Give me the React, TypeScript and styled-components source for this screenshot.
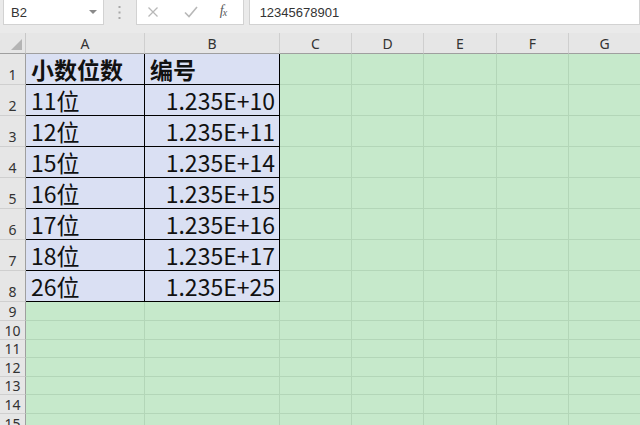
import React from "react";
import styled, { createGlobalStyle } from "styled-components";

const Global = createGlobalStyle`
  html, body { margin: 0; padding: 0; background: #c6e9cb; overflow: hidden; }
  body { width: 640px; height: 425px; font-family: "Noto Sans", "Noto Sans CJK SC", sans-serif; }
`;

const Page = styled.div`
  width: 640px;
  height: 425px;
  overflow: hidden;
  display: flex;
  flex-direction: column;
`;

const FormulaBar = styled.div`
  height: 33px;
  flex-shrink: 0;
  box-sizing: border-box;
  background: #eaeaea;
  display: flex;
  align-items: flex-start;
  padding-left: 3px;
`;

const WhiteBox = styled.div<{ $w: number; $ml?: number }>`
  box-sizing: border-box;
  width: ${(p) => p.$w}px;
  margin-left: ${(p) => p.$ml ?? 0}px;
  height: 25px;
  background: #fff;
  border: 1px solid #d2d2d2;
  border-top: none;
  display: flex;
  align-items: center;
  position: relative;
  font-family: "Liberation Sans", Arial, sans-serif;
  font-size: 13px;
  color: #333;
`;

const NameText = styled.span`
  padding-left: 7px;
  flex: 1;
`;

const Caret = styled.span`
  width: 0;
  height: 0;
  border-left: 4px solid transparent;
  border-right: 4px solid transparent;
  border-top: 4px solid #8a8a8a;
  margin-right: 6px;
`;

const Dots = styled.div`
  width: 32px;
  height: 25px;
  display: flex;
  align-items: center;
  justify-content: center;
`;

const BtnIcon = styled.span<{ $x: number }>`
  position: absolute;
  left: ${(p) => p.$x}px;
  top: 6px;
  display: flex;
`;

const Fx = styled.span`
  position: absolute;
  left: 83px;
  top: 3px;
  font-family: "Liberation Serif", "Times New Roman", serif;
  font-style: italic;
  font-size: 14px;
  color: #5a5a5a;
  letter-spacing: -1px;
`;

const Sub = styled.sub`
  font-size: 10px;
  vertical-align: -1px;
`;

const FormulaText = styled.span`
  padding-left: 10px;
`;

const Grid = styled.div`
  flex-shrink: 0;
  display: grid;
  grid-template-columns: 26px 119px 135px 72px 72px 73px 72px 72px;
  grid-template-rows: 21px repeat(8, 31px) 19px 19px 18px 19px 18px 19px 19px;
`;

const Corner = styled.div`
  background: #e6e6e6;
  box-sizing: border-box;
  border-right: 1px solid #c8c8c8;
  border-bottom: 1px solid #9f9f9f;
  position: relative;
`;

const CornerTri = styled.svg`
  position: absolute;
  right: 3px;
  bottom: 3px;
`;

const ColHead = styled.div`
  background: #e6e6e6;
  box-sizing: border-box;
  border-right: 1px solid #cfcfcf;
  border-bottom: 1px solid #9f9f9f;
  display: flex;
  align-items: center;
  justify-content: center;
  font-family: "Noto Sans", sans-serif;
  font-size: 14px;
  line-height: 14px;
  color: #333;
  padding-top: 1px;
`;

const RowHead = styled.div<{ $small?: boolean }>`
  background: #e6e6e6;
  box-sizing: border-box;
  border-right: 1px solid #9f9f9f;
  border-bottom: 1px solid #cfcfcf;
  display: flex;
  align-items: flex-end;
  justify-content: center;
  font-family: "Noto Sans", sans-serif;
  font-size: 14px;
  line-height: ${(p) => (p.$small ? 15 : 16)}px;
  color: #333;
  padding-bottom: 1px;
`;

const Cell = styled.div<{ $table?: boolean; $right?: boolean; $bold?: boolean }>`
  box-sizing: border-box;
  background: ${(p) => (p.$table ? "#dae0f3" : "#c6e9cb")};
  border-right: 1px solid ${(p) => (p.$table ? "#000" : "#b3d6b8")};
  border-bottom: 1px solid ${(p) => (p.$table ? "#000" : "#b3d6b8")};
  display: flex;
  align-items: flex-end;
  justify-content: ${(p) => (p.$right ? "flex-end" : "flex-start")};
  padding: 0 4px 1px 5px;
  font-family: "Noto Sans CJK SC", "Noto Sans", sans-serif;
  font-size: 23px;
  line-height: 28px;
  font-weight: ${(p) => (p.$bold ? 700 : 400)};
  color: #111;
  white-space: nowrap;
`;

const cols = ["A", "B", "C", "D", "E", "F", "G"];
const data: [string, string][] = [
  ["11位", "1.235E+10"],
  ["12位", "1.235E+11"],
  ["15位", "1.235E+14"],
  ["16位", "1.235E+15"],
  ["17位", "1.235E+16"],
  ["18位", "1.235E+17"],
  ["26位", "1.235E+25"],
];

export default function App() {
  const rows: React.ReactNode[] = [];
  rows.push(<RowHead key="r1">1</RowHead>);
  rows.push(
    <Cell key="1a" $table $bold>
      小数位数
    </Cell>
  );
  rows.push(
    <Cell key="1b" $table $bold>
      编号
    </Cell>
  );
  for (let c = 2; c < 7; c++) rows.push(<Cell key={`1-${c}`} />);
  data.forEach((d, i) => {
    const r = i + 2;
    rows.push(<RowHead key={`r${r}`}>{r}</RowHead>);
    rows.push(
      <Cell key={`${r}a`} $table>
        {d[0]}
      </Cell>
    );
    rows.push(
      <Cell key={`${r}b`} $table $right>
        {d[1]}
      </Cell>
    );
    for (let c = 2; c < 7; c++) rows.push(<Cell key={`${r}-${c}`} />);
  });
  for (let r = 9; r <= 15; r++) {
    rows.push(
      <RowHead key={`r${r}`} $small>
        {r}
      </RowHead>
    );
    for (let c = 0; c < 7; c++) rows.push(<Cell key={`${r}-${c}`} />);
  }

  return (
    <Page>
      <Global />
      <FormulaBar>
        <WhiteBox $w={101}>
          <NameText>B2</NameText>
          <Caret />
        </WhiteBox>
        <Dots>
          <svg width="3" height="13" viewBox="0 0 3 13">
            <rect x="0.5" y="0" width="2" height="2" fill="#a8a8a8" />
            <rect x="0.5" y="5.5" width="2" height="2" fill="#a8a8a8" />
            <rect x="0.5" y="11" width="2" height="2" fill="#a8a8a8" />
          </svg>
        </Dots>
        <WhiteBox $w={108}>
          <BtnIcon $x={10}>
            <svg width="12" height="12" viewBox="0 0 12 12">
              <path d="M1.5 1.5 L10.5 10.5 M10.5 1.5 L1.5 10.5" stroke="#b8b8b8" strokeWidth="1.3" fill="none" />
            </svg>
          </BtnIcon>
          <BtnIcon $x={47}>
            <svg width="14" height="12" viewBox="0 0 14 12">
              <path d="M1 6.5 L5 10.5 L13 1" stroke="#b8b8b8" strokeWidth="1.6" fill="none" />
            </svg>
          </BtnIcon>
          <Fx>
            f<Sub>x</Sub>
          </Fx>
        </WhiteBox>
        <WhiteBox $w={392} $ml={5}>
          <FormulaText>12345678901</FormulaText>
        </WhiteBox>
      </FormulaBar>
      <Grid>
        <Corner>
          <CornerTri width="11" height="11" viewBox="0 0 11 11">
            <polygon points="11,0 11,11 0,11" fill="#b4b4b4" />
          </CornerTri>
        </Corner>
        {cols.map((c) => (
          <ColHead key={c}>{c}</ColHead>
        ))}
        {rows}
      </Grid>
    </Page>
  );
}
